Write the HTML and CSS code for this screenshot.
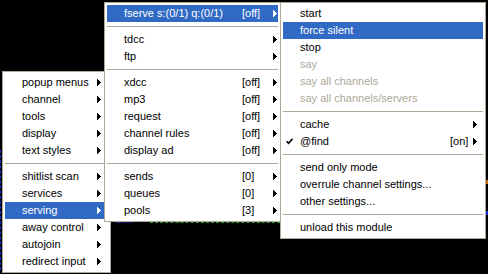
FILE: index.html
```
<!DOCTYPE html>
<html>
<head>
<meta charset="utf-8">
<link rel="stylesheet" href="styles.css">
</head>
<body>
<div class="desk">
  <div class="scrap scrap-green"></div>
  <div class="scrap scrap-blue"></div>
  <div class="scrap scrap-left"></div>
  <div class="scrap scrap-right-o"></div>
  <div class="scrap scrap-right-b"></div>

  <div class="menu m1">
    <div class="item"><span class="label">popup menus</span><svg class="arrow" viewBox="0 0 4 7"><path d="M0 0h1v7H0zM1 1h1v5H1zM2 2h1v3H2zM3 3h1v1H3z"/></svg></div>
    <div class="item"><span class="label">channel</span><svg class="arrow" viewBox="0 0 4 7"><path d="M0 0h1v7H0zM1 1h1v5H1zM2 2h1v3H2zM3 3h1v1H3z"/></svg></div>
    <div class="item"><span class="label">tools</span><svg class="arrow" viewBox="0 0 4 7"><path d="M0 0h1v7H0zM1 1h1v5H1zM2 2h1v3H2zM3 3h1v1H3z"/></svg></div>
    <div class="item"><span class="label">display</span><svg class="arrow" viewBox="0 0 4 7"><path d="M0 0h1v7H0zM1 1h1v5H1zM2 2h1v3H2zM3 3h1v1H3z"/></svg></div>
    <div class="item"><span class="label">text styles</span><svg class="arrow" viewBox="0 0 4 7"><path d="M0 0h1v7H0zM1 1h1v5H1zM2 2h1v3H2zM3 3h1v1H3z"/></svg></div>
    <div class="sep"></div>
    <div class="item"><span class="label">shitlist scan</span><svg class="arrow" viewBox="0 0 4 7"><path d="M0 0h1v7H0zM1 1h1v5H1zM2 2h1v3H2zM3 3h1v1H3z"/></svg></div>
    <div class="item"><span class="label">services</span><svg class="arrow" viewBox="0 0 4 7"><path d="M0 0h1v7H0zM1 1h1v5H1zM2 2h1v3H2zM3 3h1v1H3z"/></svg></div>
    <div class="item hl"><span class="label">serving</span><svg class="arrow" viewBox="0 0 4 7"><path d="M0 0h1v7H0zM1 1h1v5H1zM2 2h1v3H2zM3 3h1v1H3z"/></svg></div>
    <div class="item"><span class="label">away control</span><svg class="arrow" viewBox="0 0 4 7"><path d="M0 0h1v7H0zM1 1h1v5H1zM2 2h1v3H2zM3 3h1v1H3z"/></svg></div>
    <div class="item"><span class="label">autojoin</span><svg class="arrow" viewBox="0 0 4 7"><path d="M0 0h1v7H0zM1 1h1v5H1zM2 2h1v3H2zM3 3h1v1H3z"/></svg></div>
    <div class="item"><span class="label">redirect input</span><svg class="arrow" viewBox="0 0 4 7"><path d="M0 0h1v7H0zM1 1h1v5H1zM2 2h1v3H2zM3 3h1v1H3z"/></svg></div>
  </div>

  <div class="menu m2">
    <div class="item hl"><span class="label">fserve s:(0/1) q:(0/1)</span><span class="val">[off]</span><svg class="arrow" viewBox="0 0 4 7"><path d="M0 0h1v7H0zM1 1h1v5H1zM2 2h1v3H2zM3 3h1v1H3z"/></svg></div>
    <div class="sep"></div>
    <div class="item"><span class="label">tdcc</span><span class="val"></span><svg class="arrow" viewBox="0 0 4 7"><path d="M0 0h1v7H0zM1 1h1v5H1zM2 2h1v3H2zM3 3h1v1H3z"/></svg></div>
    <div class="item"><span class="label">ftp</span><span class="val"></span><svg class="arrow" viewBox="0 0 4 7"><path d="M0 0h1v7H0zM1 1h1v5H1zM2 2h1v3H2zM3 3h1v1H3z"/></svg></div>
    <div class="sep"></div>
    <div class="item"><span class="label">xdcc</span><span class="val">[off]</span><svg class="arrow" viewBox="0 0 4 7"><path d="M0 0h1v7H0zM1 1h1v5H1zM2 2h1v3H2zM3 3h1v1H3z"/></svg></div>
    <div class="item"><span class="label">mp3</span><span class="val">[off]</span><svg class="arrow" viewBox="0 0 4 7"><path d="M0 0h1v7H0zM1 1h1v5H1zM2 2h1v3H2zM3 3h1v1H3z"/></svg></div>
    <div class="item"><span class="label">request</span><span class="val">[off]</span><svg class="arrow" viewBox="0 0 4 7"><path d="M0 0h1v7H0zM1 1h1v5H1zM2 2h1v3H2zM3 3h1v1H3z"/></svg></div>
    <div class="item"><span class="label">channel rules</span><span class="val">[off]</span><svg class="arrow" viewBox="0 0 4 7"><path d="M0 0h1v7H0zM1 1h1v5H1zM2 2h1v3H2zM3 3h1v1H3z"/></svg></div>
    <div class="item"><span class="label">display ad</span><span class="val">[off]</span><svg class="arrow" viewBox="0 0 4 7"><path d="M0 0h1v7H0zM1 1h1v5H1zM2 2h1v3H2zM3 3h1v1H3z"/></svg></div>
    <div class="sep"></div>
    <div class="item"><span class="label">sends</span><span class="val">[0]</span><svg class="arrow" viewBox="0 0 4 7"><path d="M0 0h1v7H0zM1 1h1v5H1zM2 2h1v3H2zM3 3h1v1H3z"/></svg></div>
    <div class="item"><span class="label">queues</span><span class="val">[0]</span><svg class="arrow" viewBox="0 0 4 7"><path d="M0 0h1v7H0zM1 1h1v5H1zM2 2h1v3H2zM3 3h1v1H3z"/></svg></div>
    <div class="item"><span class="label">pools</span><span class="val">[3]</span><svg class="arrow" viewBox="0 0 4 7"><path d="M0 0h1v7H0zM1 1h1v5H1zM2 2h1v3H2zM3 3h1v1H3z"/></svg></div>
  </div>

  <div class="menu m3">
    <div class="item"><span class="label">start</span></div>
    <div class="item hl"><span class="label">force silent</span></div>
    <div class="item"><span class="label">stop</span></div>
    <div class="item dis"><span class="label">say</span></div>
    <div class="item dis"><span class="label">say all channels</span></div>
    <div class="item dis"><span class="label">say all channels/servers</span></div>
    <div class="sep"></div>
    <div class="item"><span class="label">cache</span><span class="val"></span><svg class="arrow" viewBox="0 0 4 7"><path d="M0 0h1v7H0zM1 1h1v5H1zM2 2h1v3H2zM3 3h1v1H3z"/></svg></div>
    <div class="item checked"><span class="check"><svg width="7" height="7" viewBox="0 0 7 7"><path d="M0.5 3.2 L2.5 5.4 L6.6 0.8" fill="none" stroke="#000" stroke-width="1.6"/></svg></span><span class="label">@find</span><span class="val">[on]</span><svg class="arrow" viewBox="0 0 4 7"><path d="M0 0h1v7H0zM1 1h1v5H1zM2 2h1v3H2zM3 3h1v1H3z"/></svg></div>
    <div class="sep"></div>
    <div class="item"><span class="label">send only mode</span></div>
    <div class="item"><span class="label">overrule channel settings...</span></div>
    <div class="item"><span class="label">other settings...</span></div>
    <div class="sep"></div>
    <div class="item"><span class="label">unload this module</span></div>
  </div>
</div>
</body>
</html>
```

FILE: styles.css
```
html, body {
  margin: 0;
  padding: 0;
  background: #000;
}

.desk {
  position: relative;
  width: 488px;
  height: 274px;
  overflow: hidden;
  background: #000;
  font-family: "Liberation Sans", Arial, sans-serif;
  font-size: 11px;
  color: #000;
}

.scrap {
  position: absolute;
}

.scrap-green {
  left: 150px;
  top: 222px;
  width: 130px;
  height: 0;
  border-top: 1px dashed #2a9a2a;
}

.scrap-blue {
  left: 116px;
  top: 222px;
  width: 16px;
  height: 0;
  border-top: 1px dotted #2233cc;
}

.scrap-left {
  left: 0;
  top: 150px;
  width: 0;
  height: 120px;
  border-left: 1px dashed #1a2bd0;
}

.scrap-right-o {
  left: 486px;
  top: 180px;
  width: 2px;
  height: 4px;
  background: #c86a10;
}

.scrap-right-b {
  left: 486px;
  top: 211px;
  width: 2px;
  height: 4px;
  background: #1a2bd0;
}

.menu {
  position: absolute;
  box-sizing: border-box;
  background: #fff;
  border: 1px solid #aca899;
  padding: 2px;
}

.m1 {
  left: 2px;
  top: 71px;
  width: 109px;
  z-index: 1;
}

.m2 {
  left: 104px;
  top: 2px;
  width: 177px;
  z-index: 2;
}

.m3 {
  left: 280px;
  top: 2px;
  width: 206px;
  z-index: 3;
}

.item {
  display: flex;
  align-items: center;
  height: 17px;
  line-height: 17px;
  padding-left: 17px;
  white-space: nowrap;
}

.m1 .item { padding-right: 7px; }
.m2 .item { padding-right: 1px; }
.m3 .item { padding-right: 6px; }

.label {
  flex: 1;
}

.m2 .val { width: 31px; }
.m3 .val { width: 23px; }

.arrow {
  display: block;
  width: 4px;
  height: 7px;
  fill: #000;
  flex: none;
}

.item.checked {
  padding-left: 3px;
}

.check {
  width: 14px;
  display: flex;
  align-items: center;
}

.check svg {
  display: block;
}

.hl {
  background: #316ac5;
  color: #fff;
}

.hl .arrow {
  fill: #fff;
}

.dis {
  color: #aca899;
}

.sep {
  height: 9px;
  display: flex;
  align-items: center;
}

.sep::before {
  content: "";
  display: block;
  width: 100%;
  height: 1px;
  background: #aca899;
}
```
